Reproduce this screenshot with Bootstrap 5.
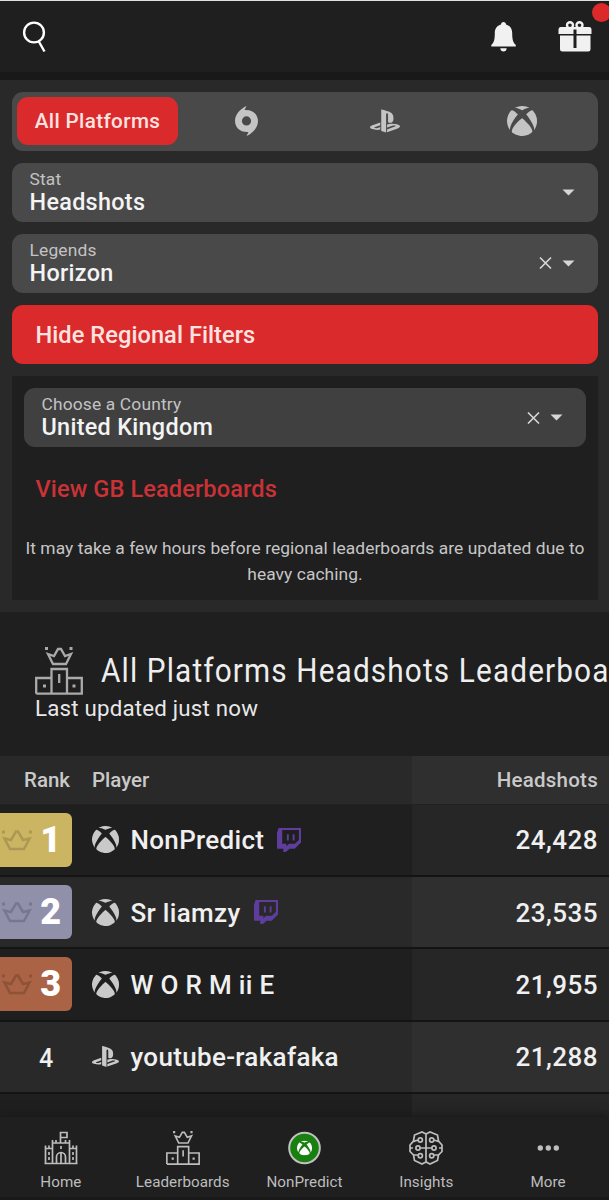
<!DOCTYPE html>
<html lang="en">
<head>
<meta charset="utf-8">
<meta name="viewport" content="width=device-width, initial-scale=1">
<title>Leaderboards</title>
<link href="https://cdn.jsdelivr.net/npm/bootstrap@5.3.0/dist/css/bootstrap.min.css" rel="stylesheet">
<style>
body{background:#1f1f1f;color:#eee;font-family:Roboto,"Liberation Sans",sans-serif;height:1200px;overflow:hidden;line-height:1}
svg{display:block;flex:none}
.topbar{height:72px;border-top:1px solid #dce4e0;background:#1f1f1f;padding:0 17px 0 22px}
.strip{height:7.5px;background:#191919}
.dot{position:absolute;left:592px;top:3px;width:19px;height:19px;border-radius:50%;background:#dc2a2a}
.filters{background:#292929;height:532px;padding:12px 11px 12px 12px;gap:12px}
.field{height:59.2px;border-radius:11px;background:#494949;flex:none}
.tabs{padding:5px 7px 5px 5px;color:#c4c4c4}
.tab-on{width:161px;height:48px;border-radius:11px;background:#da2a2b;color:#ffe3e0;font-size:20.7px;font-weight:500;letter-spacing:.35px;padding-top:1px}
.select{padding:0 23px 0 17.5px;color:#d6d6d6}
.select small{display:block;font-size:17.4px;line-height:20px;letter-spacing:.15px;color:#c3c3c3}
.select b{display:block;font-size:23.4px;line-height:27px;font-weight:500;letter-spacing:.3px;color:#f4f4f4}
.clear-x{margin-right:9px}
.redbtn{background:#da2a2b;color:#ffe3e0;font-size:23.6px;font-weight:500;padding:2px 0 0 23.5px;letter-spacing:.06px}
.region{background:#1f1f1f;height:224px;padding:12px}
.region .field{background:#404040}
.gb{color:#c93236;font-size:23.6px;font-weight:500;letter-spacing:.1px;line-height:28px;padding:28px 11.5px 0}
.note{font-size:17.4px;line-height:26px;letter-spacing:.06px;color:#c6c6c6;text-align:center;margin:32px -10px 0;white-space:nowrap}
.heading{height:144.500px;padding:35px 0 0 35px;overflow:hidden}
.title{font-size:34px;font-weight:400;white-space:nowrap;line-height:46px;transform:scaleX(.875);transform-origin:0 50%;letter-spacing:1.3px;margin:0 0 2px 18px}
.sub{font-size:22.3px;line-height:26px;letter-spacing:.2px;color:#e8e8e8}
.rowx{height:72.4px;border-bottom:2px solid #141414;font-size:26px;font-weight:500;color:#f0f0f0}
.rowx:nth-child(odd){background:#292929}
.score{width:197px;align-self:stretch;background:#262626;padding:1px 11px 0 0;letter-spacing:.45px;margin-left:auto}
.rowx:nth-child(odd) .score{background:#2f2f2f}
.thead-x{height:48.5px;font-size:20.5px;color:#c9c9c9;border-bottom:1px solid #222}
.thead-x .score{letter-spacing:.25px}
.rank{width:92px}
.rank-num{text-align:center;font-size:25px;padding-top:3px}
.medal{width:72px;height:54px;border-radius:0 6px 6px 0;font-size:36px;font-weight:900;color:#fff;padding:0 11px 0 2px}
.player{margin-left:11.5px;letter-spacing:.32px;padding-top:1px}
.player+svg{margin-left:13px}
.bottomnav{position:absolute;left:0;right:0;top:1117px;height:83px;background:#1f1f1f;box-shadow:0 -3px 8px #1a1a1a;border-bottom:3px solid #191919;color:#bdbdbd}
.bottomnav div{width:122px;padding-top:14px;font-size:15.2px;letter-spacing:.05px}
.bottomnav span{line-height:18px;margin-top:8px}
</style>
</head>
<body class="position-relative">
<svg width="0" height="0" class="position-absolute">
<defs>
<symbol id="xbox" viewBox="8 8 496 496"><path fill="currentColor" d="M369.9 318.2c44.3 54.3 64.7 98.8 54.4 118.7-7.9 15.1-56.7 44.6-92.6 55.9-29.6 9.3-68.4 13.3-100.4 10.2-38.2-3.7-76.9-17.4-110.1-39C93.3 445.8 87 438.3 87 423.4c0-29.9 32.9-82.3 89.2-142.1 32-33.9 76.5-73.7 81.4-72.6 9.4 2.1 84.3 75.1 112.3 109.5zM188.6 143.8c-29.7-26.9-58.1-53.9-86.4-63.4-15.2-5.1-16.3-4.8-28.7 8.1-29.2 30.4-53.5 79.7-60.3 122.4-5.4 34.2-6.1 43.8-4.2 60.5 5.6 50.5 17.3 85.4 40.5 120.9 9.5 14.6 12.1 17.3 9.3 9.9-4.2-11-.3-37.5 9.5-64 14.3-39 53.9-112.9 120.3-194.4zm311.6 63.5C483.3 127.3 432.7 77 425.6 77c-7.3 0-24.2 6.5-36 13.9-23.3 14.5-41 31.4-64.3 52.8C367.7 197 427.5 283.1 448.2 346c6.8 20.7 9.7 41.1 7.4 52.3-1.7 8.5-1.7 8.5 1.4 4.6 6.1-7.7 19.9-31.3 25.4-43.5 7.4-16.2 15-40.2 18.6-58.7 4.3-22.5 3.9-70.8-.8-93.4zM141.3 43C189 40.5 251 77.5 255.6 78.4c.7.1 10.4-4.2 21.6-9.7 63.9-31.1 94-25.8 107.4-25.2-63.9-39.3-152.7-50-233.9-11.7-23.4 11.1-24 11.9-9.4 11.2z"/></symbol>
<symbol id="ps" viewBox="0 32 576 446"><path fill="currentColor" d="M570.9 372.3c-11.3 14.2-38.8 24.3-38.8 24.3L327 470.2v-54.3l150.9-53.8c17.1-6.1 19.8-14.8 5.8-19.4-13.9-4.6-39.1-3.3-56.2 2.9L327 381.1v-56.4c23.2-7.8 47.1-13.6 75.7-16.8 40.9-4.5 90.9.6 130.2 15.5 44.2 14 49.2 34.7 38 48.9zm-224.4-92.5v-139c0-16.3-3-31.3-18.3-35.6-11.7-3.8-19 7.1-19 23.4v347.9l-93.8-29.8V32c39.9 7.4 98 24.9 129.2 35.4C424.1 94.7 451 128.7 451 205.2c0 74.5-46 102.8-104.5 74.6zM43.2 410.2c-45.4-12.8-53-39.5-32.3-54.8 19.1-14.2 51.7-24.9 51.7-24.9l134.5-47.8v54.5l-96.8 34.6c-17.1 6.1-19.7 14.8-5.8 19.4 13.9 4.6 39.1 3.3 56.2-2.9l46.4-16.9v48.8c-51.6 9.3-101.4 7.3-153.9-10z"/></symbol>
<symbol id="twitch" viewBox="0 0 23 23"><path fill="#5f3d9c" fill-rule="evenodd" d="M1.500 0H23v14l-6 6h-5l-3.500 3H6v-3H0V4.500zM5 2v13h4v2.500l2.500-2.500h5.500l4-3.500V2zM9.500 6h1.800v6H9.500zM15 6h1.800v6H15z"/></symbol>
<symbol id="crown" viewBox="0 0 30 22"><path fill="none" stroke="currentColor" stroke-width="2.500" d="M2.500 9.500l6.500 1.500 5-8.500h2l5 8.500 6.500-1.500-5.500 10.500H8z"/><path fill="currentColor" d="M0 1.500h3v3H0zM27 1.500h3v3h-3z"/></symbol>
<symbol id="podium" viewBox="0 0 48 48"><path fill="none" stroke="currentColor" stroke-width="2.300" d="M13 7l6 2 4-7h3l4 7 6-2-5 10H18zM16.500 46.500V22h15.500v24.500M1.200 46.700V31h15.300M32 31h14.800v15.700H1.200M24.200 27v9"/><path fill="currentColor" d="M10 0h3v3h-3zM34.500 0h3v3h-3zM8 37.500h3v3H8zM37.500 37.500h3v3h-3z"/></symbol>
</defs>
</svg>

<header class="topbar d-flex align-items-center">
<svg width="26" height="32" viewBox="0 0 26 32" fill="none" stroke="#fff" stroke-width="2.400"><circle cx="12" cy="11.500" r="9.900"/><path d="M16.500 20l6 10.500"/></svg>
<svg class="ms-auto" width="25" height="30" viewBox="0 0 25 30" fill="#f1f1f1"><path d="M12.500 0c1.500 0 2.500 1 2.500 2.600 4 1 6.200 4.300 6.200 8.400 0 6.500.8 9.500 3.600 12V24.600H.3V23c2.800-2.500 3.500-5.500 3.500-12 0-4.100 2.200-7.400 6.200-8.400C10 1 11 0 12.500 0zM9.300 26.200h6.400c0 2-1.400 3.300-3.200 3.300s-3.200-1.300-3.200-3.300z"/></svg>
<svg style="margin-left:42px" width="34" height="31" viewBox="0 0 34 31"><g fill="none" stroke="#f1f1f1" stroke-width="2.400"><circle cx="12" cy="4.200" r="3"/><circle cx="21.500" cy="4.200" r="3"/></g><path fill="#f1f1f1" d="M2.500 6h28.500q2.500 0 2.500 2.500V13H.5V8.500Q.5 6 2.500 6zM2 14.500h30.500V28q0 2.500-2.500 2.500H4.500Q2 30.500 2 28z"/><path stroke="#1f1f1f" stroke-width="3" d="M17 8.500v18.500"/></svg>
</header>
<i class="dot"></i>
<div class="strip"></div>

<section class="filters d-flex flex-column">
<div class="field tabs d-flex align-items-center">
<div class="tab-on d-flex align-items-center justify-content-center">All Platforms</div>
<div class="col d-flex justify-content-center"><svg width="23" height="30" viewBox="0 0 23 30"><path fill="currentColor" fill-rule="evenodd" d="M11.500 0L9.500 4C18.500 3.500 23 9 23 15.300 23 22 17 27.500 11.500 30l2-4C4.500 26.500 0 21 0 14.700 0 8 6 2.500 11.500 0zM11.500 10.300a4.600 4.600 0 100 9.200 4.600 4.600 0 000-9.200z"/></svg></div>
<div class="col d-flex justify-content-center"><svg width="30" height="24"><use href="#ps"/></svg></div>
<div class="col d-flex justify-content-center"><svg width="30" height="30"><use href="#xbox"/></svg></div>
</div>
<div class="field select d-flex align-items-center"><div class="me-auto"><small>Stat</small><b>Headshots</b></div><svg width="13" height="7"><path fill="currentColor" d="M.5 .5h12l-6 6z"/></svg></div>
<div class="field select d-flex align-items-center"><div class="me-auto"><small>Legends</small><b>Horizon</b></div><svg class="clear-x" width="15" height="14" fill="none" stroke="currentColor" stroke-width="1.700"><path d="M2 1.500l11 11M13 1.500l-11 11"/></svg><svg width="13" height="7"><path fill="currentColor" d="M.5 .5h12l-6 6z"/></svg></div>
<div class="field redbtn d-flex align-items-center">Hide Regional Filters</div>
<div class="region">
<div class="field select d-flex align-items-center"><div class="me-auto"><small>Choose a Country</small><b>United Kingdom</b></div><svg class="clear-x" width="15" height="14" fill="none" stroke="currentColor" stroke-width="1.700"><path d="M2 1.500l11 11M13 1.500l-11 11"/></svg><svg width="13" height="7"><path fill="currentColor" d="M.5 .5h12l-6 6z"/></svg></div>
<div class="gb">View GB Leaderboards</div>
<div class="note">It may take a few hours before regional leaderboards are updated due to<br>heavy caching.</div>
</div>
</section>

<section class="heading">
<div class="d-flex"><svg width="48" height="48" color="#aaa"><use href="#podium"/></svg><h1 class="title">All Platforms Headshots Leaderboards</h1></div>
<div class="sub">Last updated just now</div>
</section>

<section>
<div class="rowx thead-x d-flex align-items-center"><div class="rank ps-4">Rank</div><div>Player</div><div class="score d-flex align-items-center justify-content-end">Headshots</div></div>
<div class="rowx d-flex align-items-center"><div class="rank"><div class="medal d-flex align-items-center justify-content-between" style="background:#cbb562"><svg width="30" height="22" color="#ab9953"><use href="#crown"/></svg>1</div></div><svg width="27" height="27" color="#c9c9c9"><use href="#xbox"/></svg><span class="player">NonPredict</span><svg width="24" height="24"><use href="#twitch"/></svg><div class="score d-flex align-items-center justify-content-end">24,428</div></div>
<div class="rowx d-flex align-items-center"><div class="rank"><div class="medal d-flex align-items-center justify-content-between" style="background:#9090ab"><svg width="30" height="22" color="#777790"><use href="#crown"/></svg>2</div></div><svg width="27" height="27" color="#c9c9c9"><use href="#xbox"/></svg><span class="player">Sr liamzy</span><svg width="24" height="24"><use href="#twitch"/></svg><div class="score d-flex align-items-center justify-content-end">23,535</div></div>
<div class="rowx d-flex align-items-center"><div class="rank"><div class="medal d-flex align-items-center justify-content-between" style="background:#aa6344"><svg width="30" height="22" color="#8e5239"><use href="#crown"/></svg>3</div></div><svg width="27" height="27" color="#c9c9c9"><use href="#xbox"/></svg><span class="player">W O R M ii E</span><div class="score d-flex align-items-center justify-content-end">21,955</div></div>
<div class="rowx d-flex align-items-center"><div class="rank rank-num">4</div><svg width="27" height="21" color="#c9c9c9"><use href="#ps"/></svg><span class="player">youtube-rakafaka</span><div class="score d-flex align-items-center justify-content-end">21,288</div></div>
<div class="rowx d-flex"><div class="score"></div></div>
</section>

<nav class="bottomnav d-flex">
<div class="d-flex flex-column align-items-center"><svg width="34" height="34" viewBox="0 0 34 34" fill="none" stroke="currentColor" stroke-width="1.700"><path d="M1.500 32.500V14.500M1.500 17.500h7M5 14.500v3M8.500 9v23.500M8.500 12h17M12 9v3M21.500 9v3M25.500 9v23.500M25.500 17.500h7M29 14.500v3M32.500 14.500v18M.5 32.500h33M16.500 12V1.500h6.500v5h-6.500M5 21v3M5 26v3M29 21v3M29 26v3M17 15v3M12.500 32V26a4.500 4.500 0 019 0v6M17 21.500V32"/></svg><span>Home</span></div>
<div class="d-flex flex-column align-items-center"><svg width="34" height="34"><use href="#podium"/></svg><span>Leaderboards</span></div>
<div class="d-flex flex-column align-items-center"><svg width="34" height="34" viewBox="0 0 34 34"><circle cx="17.500" cy="17" r="15.300" fill="#17800f" stroke="#c2c2c2" stroke-width="2"/><svg x="10" y="9.500" width="15" height="15" color="#fff"><use href="#xbox"/></svg></svg><span>NonPredict</span></div>
<div class="d-flex flex-column align-items-center"><svg width="34" height="34" viewBox="0 0 34 34" fill="none" stroke="currentColor" stroke-width="1.700"><path d="M17 3v28M17 3l-4-2-7.500 3-1 6L1 14v6.500l3.500 3.500 1 5.500L13 33l4-2 4 2 7.500-3.500 1-5.500 3.500-3.500V14l-3.500-4-1-6L21 1zM4.500 10.500L9 9M1 17h3M5 24h4M11 17h12M29.500 10.500L25 9M33 17h-3M29 24h-4"/><circle cx="11.300" cy="9" r="2.100"/><circle cx="22.700" cy="9" r="2.100"/><circle cx="9" cy="17" r="2.100"/><circle cx="25" cy="17" r="2.100"/><circle cx="11.300" cy="24.700" r="2.100"/><circle cx="22.700" cy="24.700" r="2.100"/></svg><span>Insights</span></div>
<div class="d-flex flex-column align-items-center"><svg width="34" height="34" fill="currentColor"><circle cx="9.300" cy="17" r="2.700"/><circle cx="17.300" cy="17" r="2.700"/><circle cx="25.300" cy="17" r="2.700"/></svg><span>More</span></div>
</nav>
<script src="https://cdn.jsdelivr.net/npm/bootstrap@5.3.0/dist/js/bootstrap.bundle.min.js"></script>
</body>
</html>
